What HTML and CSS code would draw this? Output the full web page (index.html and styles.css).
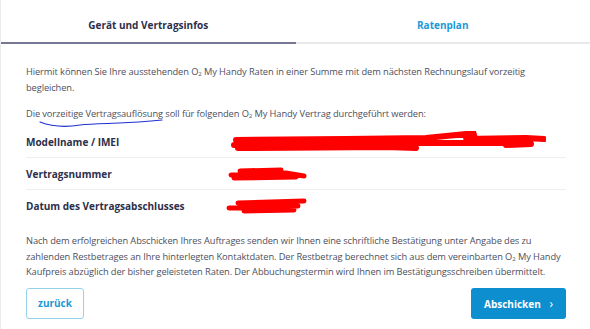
FILE: index.html
```html
<!DOCTYPE html>
<html lang="de">
<head>
    <meta charset="UTF-8">
    <title>Vorzeitige Vertragsauflösung</title>
    <link rel="stylesheet" href="styles.css">
</head>
<body>

    <!-- Tabs -->
    <div class="tabs">
        <div class="tab active">Gerät und Vertragsinfos</div>
        <div class="tab">Ratenplan</div>
    </div>

    <div class="content">
        <p class="intro">Hiermit können Sie Ihre ausstehenden O<sub>2</sub> My Handy Raten in einer Summe mit dem nächsten Rechnungslauf vorzeitig begleichen.</p>
        <p class="intro second">Die <span class="marked">vorzeitige Vertragsauflösung<svg class="scribble-line" width="130" height="10" viewBox="0 0 130 10"><path d="M2 3 C 15 8, 30 8, 42 6 C 60 4, 90 5, 124 1" fill="none" stroke="#1f2fd0" stroke-width="1.2" stroke-linecap="round"/></svg></span> soll für folgenden O<sub>2</sub> My Handy Vertrag durchgeführt werden:</p>

        <!-- Contract data -->
        <div class="details">
            <div class="row">
                <div class="label">Modellname / IMEI</div>
                <div class="value">
                    <svg width="320" height="22" viewBox="0 0 320 22">
                        <path d="M10 9 L 120 8 L 200 7 L 250 2 L 238 8 L 300 7 L 318 8 M8 14 L 120 13 L 190 12 L 300 12 M12 17 L 160 16 L 190 17 M280 14 L 305 13" fill="none" stroke="#ff0000" stroke-width="6" stroke-linecap="round"/>
                    </svg>
                </div>
            </div>
            <div class="row">
                <div class="label">Vertragsnummer</div>
                <div class="value">
                    <svg width="90" height="16" viewBox="0 0 90 16">
                        <path d="M5 9 L 60 7 L 78 10 M14 5 L 55 4 M8 12 L 70 11" fill="none" stroke="#ff0000" stroke-width="5" stroke-linecap="round"/>
                    </svg>
                </div>
            </div>
            <div class="row">
                <div class="label">Datum des Vertragsabschlusses</div>
                <div class="value">
                    <svg width="90" height="18" viewBox="0 0 90 18">
                        <path d="M12 6 L 78 4 M3 11 L 72 9 M18 14 L 68 13" fill="none" stroke="#ff0000" stroke-width="5" stroke-linecap="round"/>
                    </svg>
                </div>
            </div>
        </div>

        <p class="note">Nach dem erfolgreichen Abschicken Ihres Auftrages senden wir Ihnen eine schriftliche Bestätigung unter Angabe des zu zahlenden Restbetrages an Ihre hinterlegten Kontaktdaten. Der Restbetrag berechnet sich aus dem vereinbarten O<sub>2</sub> My Handy Kaufpreis abzüglich der bisher geleisteten Raten. Der Abbuchungstermin wird Ihnen im Bestätigungsschreiben übermittelt.</p>

        <div class="actions">
            <button class="btn btn-back">zurück</button>
            <button class="btn btn-send">Abschicken <span class="chevron">&#8250;</span></button>
        </div>
    </div>

</body>
</html>
```

FILE: styles.css
```css
body {
    font-family: "Open Sans", "Noto Sans", Arial, sans-serif;
    background-color: #fff;
    margin: 0;
    padding: 0;
    border-left: 1px solid #ececec;
    min-height: 329px;
    box-sizing: border-box;
    color: #4c4f60;
}

/* Tabs */
.tabs {
    display: flex;
}

.tab {
    flex: 1;
    height: 42px;
    line-height: 50px;
    text-align: center;
    font-size: 10px;
    font-weight: 700;
    color: #1b9ad6;
    border-bottom: 2px solid #e9e9ec;
}

.tab.active {
    color: #2c2f4a;
    border-bottom-color: #767893;
}

/* Content */
.content {
    padding: 20px 24px 0 25px;
}

p {
    margin: 0;
    font-size: 9.3px;
    letter-spacing: -0.1px;
    line-height: 16px;
}

sub {
    font-size: 6px;
    line-height: 0;
    vertical-align: -1px;
}

.intro.second {
    margin-top: 10px;
}

.marked {
    position: relative;
}

.scribble-line {
    position: absolute;
    left: -4px;
    top: 12px;
}

/* Details table */
.details {
    margin-top: 4px;
}

.row {
    display: flex;
    align-items: center;
    height: 31px;
    border-bottom: 1px solid #efeff1;
}

.row:last-child {
    border-bottom: none;
}

.label {
    width: 200px;
    font-size: 10px;
    font-weight: 700;
    color: #2c2f4a;
}

.value {
    display: flex;
    align-items: center;
}

.note {
    margin-top: 12px;
    margin-right: -4px;
    line-height: 15.5px;
}

/* Buttons */
.actions {
    display: flex;
    justify-content: space-between;
    margin-top: 8px;
}

.btn {
    font-family: inherit;
    font-size: 10px;
    font-weight: 700;
    border-radius: 3px;
    height: 31px;
    cursor: pointer;
}

.btn-back {
    width: 58px;
    background-color: #fff;
    color: #1b9ad6;
    border: 1px solid #94d2ee;
}

.btn-send {
    width: 95px;
    background-color: #0c8ecf;
    color: #fff;
    border: none;
}

.chevron {
    margin-left: 6px;
    font-size: 12px;
    font-weight: 400;
}
```
